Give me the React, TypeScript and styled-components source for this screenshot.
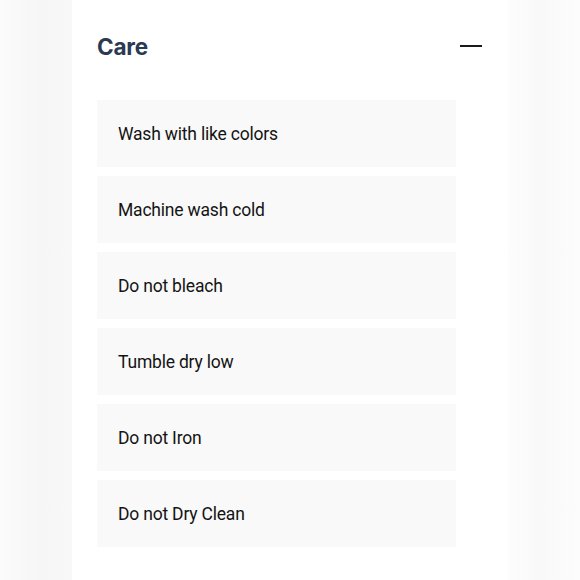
import React from "react";
import styled, { createGlobalStyle } from "styled-components";

const Global = createGlobalStyle`
  html, body { margin: 0; padding: 0; }
  body {
    width: 580px;
    height: 580px;
    overflow: hidden;
    font-family: Inter, "Noto Sans", sans-serif;
    background: linear-gradient(90deg, #fbfbfb 0px, #f6f6f6 40px, #f8f8f8 72px, #fdfdfd 508px, #f9f9f9 540px, #fcfcfc 580px);
  }
`;

const Page = styled.div`
  display: flex;
  justify-content: flex-start;
  height: 580px;
  padding-left: 72px;
  box-sizing: border-box;
`;

const Panel = styled.section`
  width: 436px;
  height: 580px;
  background: #ffffff;
  box-sizing: border-box;
  padding: 29px 26px 0 25px;
  display: flex;
  flex-direction: column;
`;

const Header = styled.div`
  display: flex;
  align-items: center;
  justify-content: space-between;
  height: 34px;
`;

const Title = styled.h2`
  margin: 0;
  font-family: Inter, "Noto Sans", sans-serif;
  font-weight: 700;
  font-size: 22.5px;
  letter-spacing: -0.2px;
  color: #2b3a52;
`;

const Minus = styled.span`
  display: block;
  width: 22px;
  height: 2px;
  background: #1a1a1a;
  margin-top: -1px;
`;

const List = styled.ul`
  list-style: none;
  margin: 37px 0 0 0;
  padding: 0;
  display: flex;
  flex-direction: column;
  gap: 9px;
  width: 359px;
`;

const Item = styled.li`
  height: 67px;
  background: #f9f9f9;
  display: flex;
  align-items: center;
  padding-left: 21px;
  font-family: Roboto, "Noto Sans", sans-serif;
  font-size: 17.5px;
  letter-spacing: -0.2px;
  color: #141414;
  padding-top: 1px;
  box-sizing: border-box;
`;

const items = [
  "Wash with like colors",
  "Machine wash cold",
  "Do not bleach",
  "Tumble dry low",
  "Do not Iron",
  "Do not Dry Clean",
];

export default function App() {
  return (
    <>
      <Global />
      <Page>
        <Panel>
          <Header>
            <Title>Care</Title>
            <Minus />
          </Header>
          <List>
            {items.map((t) => (
              <Item key={t}>{t}</Item>
            ))}
          </List>
        </Panel>
      </Page>
    </>
  );
}
